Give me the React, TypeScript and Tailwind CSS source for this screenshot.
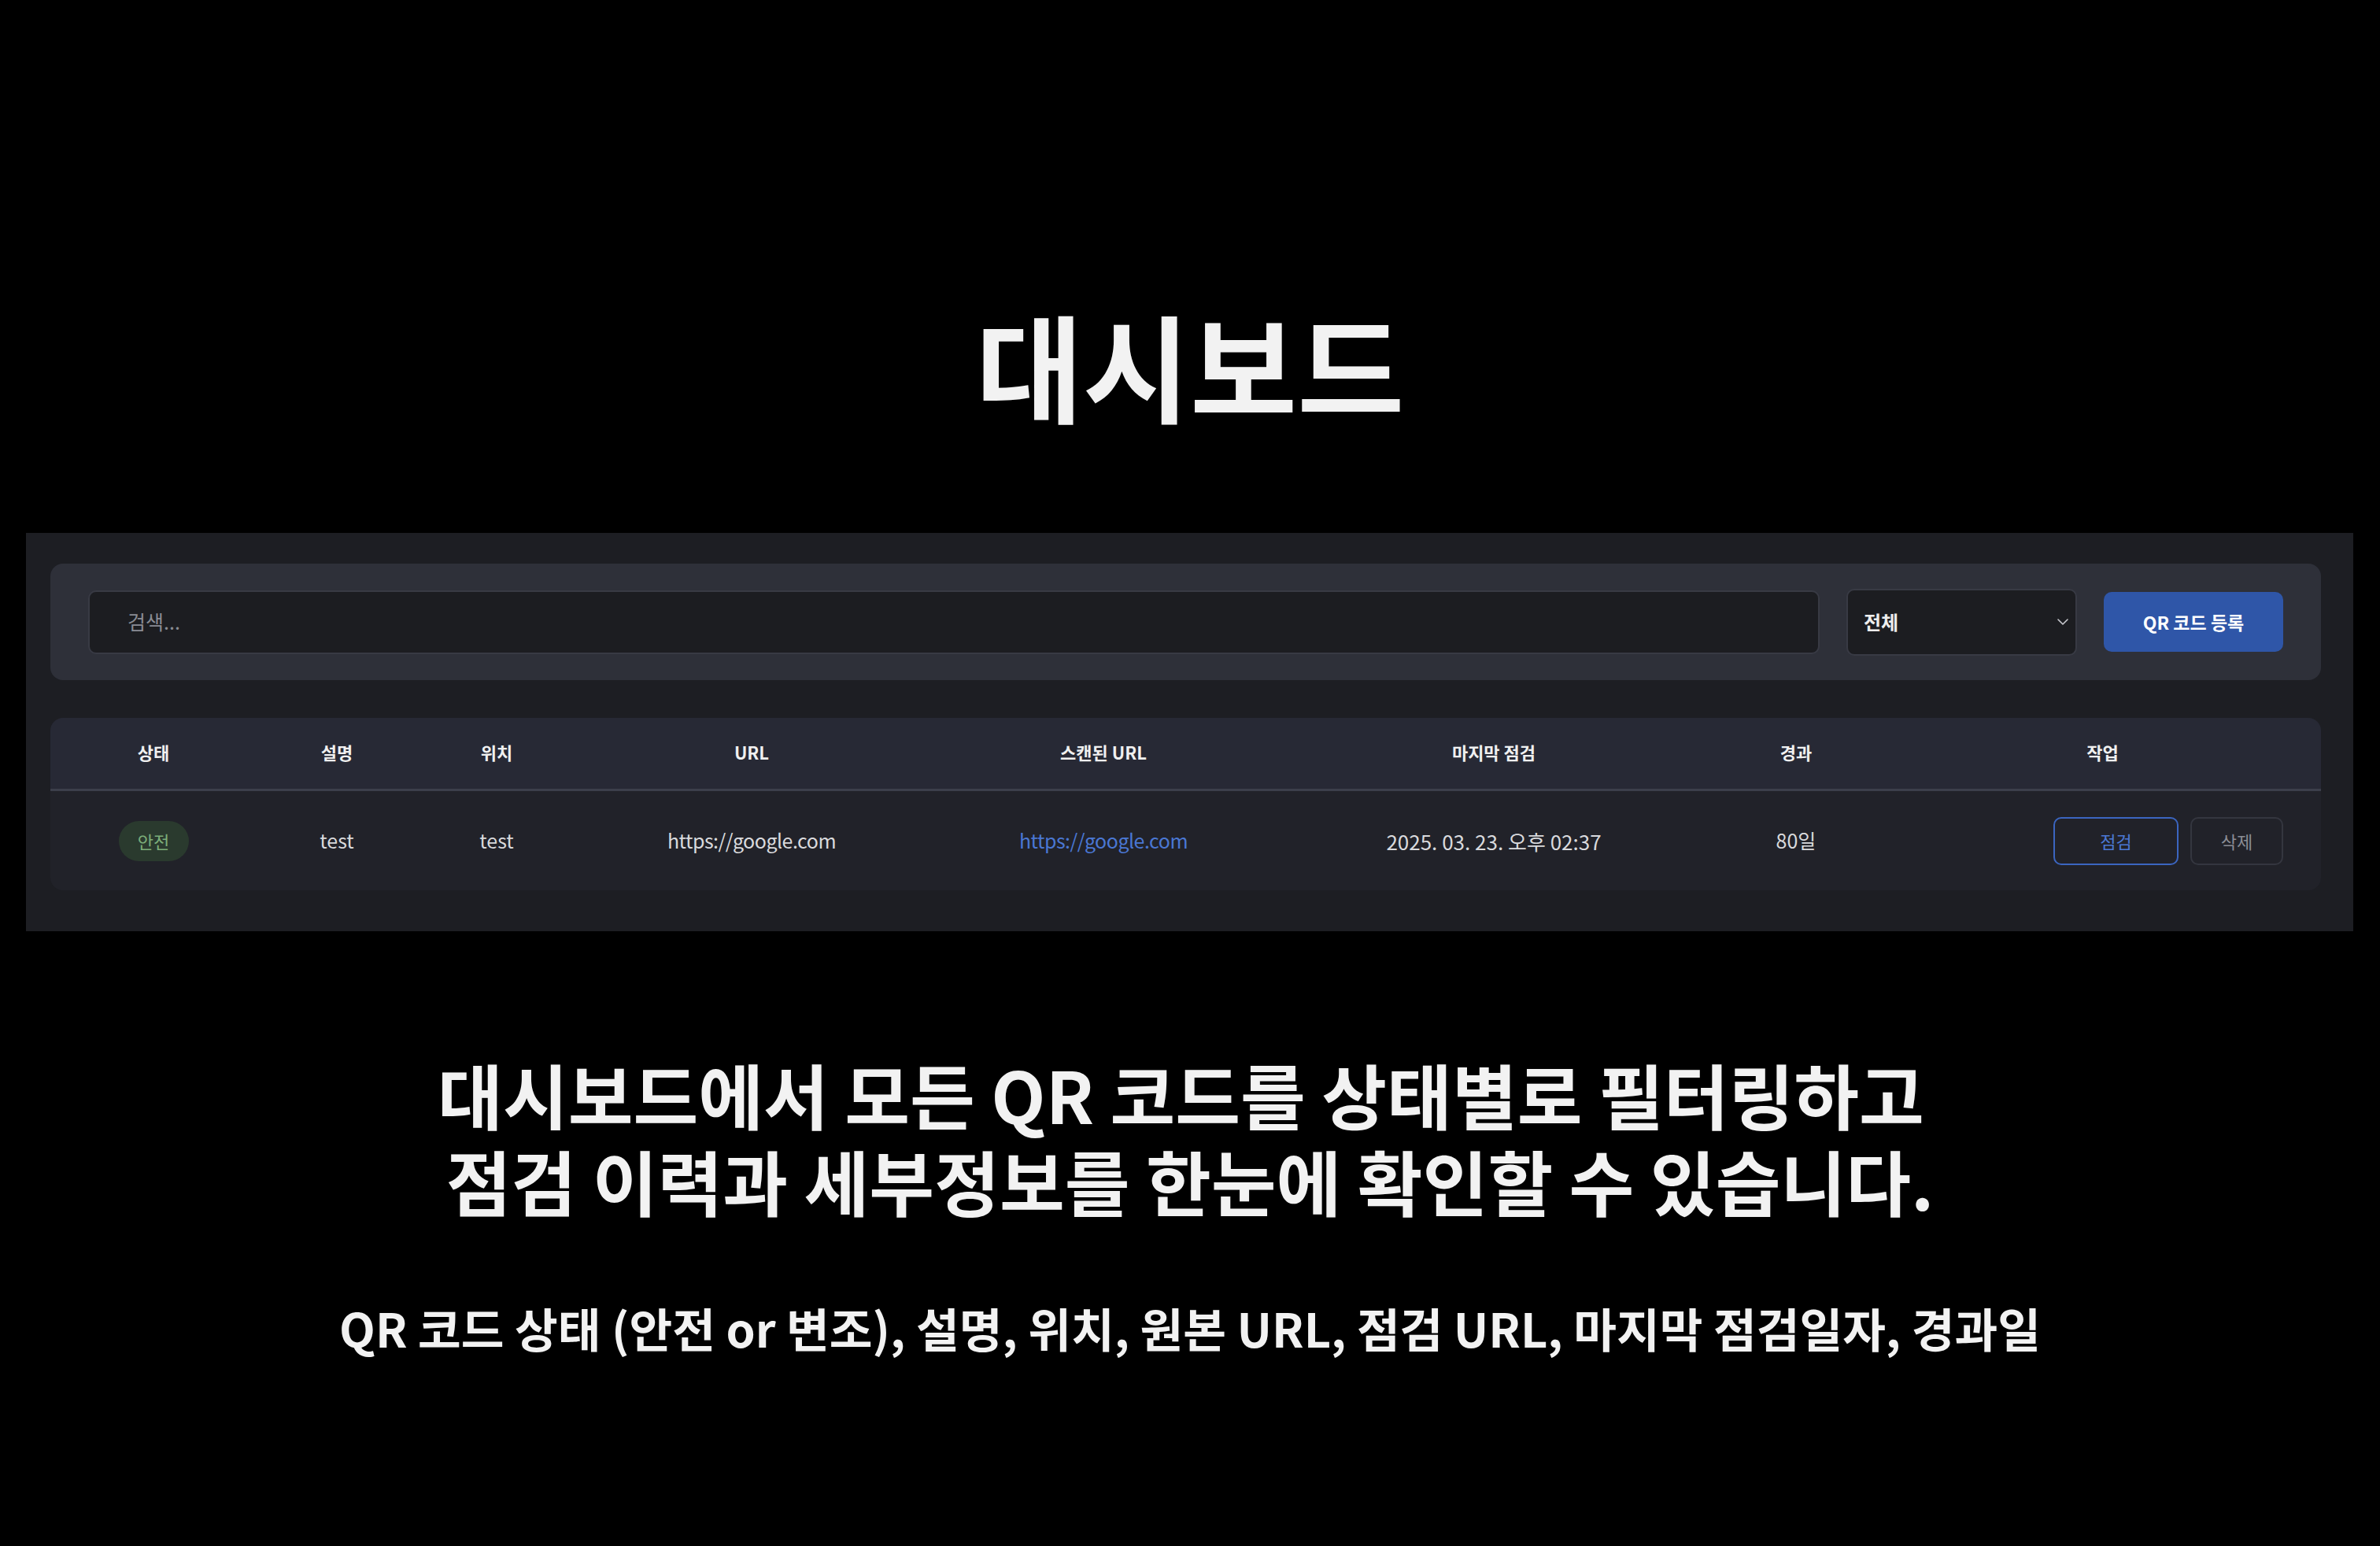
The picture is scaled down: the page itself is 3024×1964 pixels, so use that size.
import React from "react";

const FONT = { fontFamily: '"Noto Sans CJK KR", "Noto Sans", sans-serif' };

function Chevron() {
  return (
    <svg width="24" height="24" viewBox="0 0 24 24" fill="none" stroke="#c9cad0" strokeWidth="1.6" strokeLinecap="round" strokeLinejoin="round">
      <path d="M6 9 L12 15 L18 9" />
    </svg>
  );
}

const cols = "grid grid-cols-[262px_204px_202px_446px_448px_544px_224px_555px]";

export default function App() {
  const headers = ["상태", "설명", "위치", "URL", "스캔된 URL", "마지막 점검", "경과", "작업"];
  return (
    <div className="w-[3024px] h-[1964px] bg-black flex flex-col items-center overflow-hidden" style={FONT}>
      <div className="mt-[374px] h-[175px] text-[148px] leading-[175px] font-bold text-[#f2f2f2]">
        대시보드
      </div>

      <div className="mt-[128px] w-[2957px] self-start ml-[33px] bg-[#1d1e23] pl-[31px] pr-[41px] pt-[39px] pb-[52px]">
        <div className="h-[148px] rounded-[16px] bg-[#2e3039] px-[48px] flex items-center gap-[34px]">
          <div className="flex-1 h-[81px] rounded-[10px] border-2 border-[#383a44] bg-[#1c1d21] flex items-center pl-[48px] text-[25px] text-[#8a8c94]">
            검색...
          </div>
          <div className="w-[293px] h-[85px] rounded-[10px] border-2 border-[#383a44] bg-[#1c1d21] flex items-center justify-between pl-[20px] pr-[4px] text-[24px] font-semibold text-[#eeeeee]">
            <span>전체</span>
            <Chevron />
          </div>
          <div className="w-[228px] h-[76px] rounded-[10px] bg-[#2f56a8] flex items-center justify-center text-[23px] font-bold text-white">
            QR 코드 등록
          </div>
        </div>

        <div className="mt-[48px] rounded-[16px] overflow-hidden">
          <div className={`${cols} h-[93px] bg-[#272935] border-b-[3px] border-[#3c3f4b] items-center text-center text-[22px] font-bold text-[#f0f0f0]`}>
            {headers.map((h) => (
              <div key={h} className="-mt-[4px]">{h}</div>
            ))}
          </div>
          <div className={`${cols} h-[126px] bg-[#212229] items-center text-center text-[25px] text-[#d9dadd]`}>
            <div className="flex justify-center">
              <span className="w-[89px] h-[51px] rounded-full bg-[#2a3a2e] text-[#7cae79] text-[22px] flex items-center justify-center">안전</span>
            </div>
            <div>test</div>
            <div>test</div>
            <div className="tracking-[-0.5px]">https://google.com</div>
            <div className="tracking-[-0.5px] text-[#4a77d3]">https://google.com</div>
            <div className="text-[26px]">2025. 03. 23. 오후 02:37</div>
            <div>80일</div>
            <div className="flex justify-end gap-[15px] pr-[48px]">
              <span className="w-[159px] h-[61px] rounded-[10px] border-2 border-[#3b65c0] text-[#4b78d4] text-[22px] flex items-center justify-center">점검</span>
              <span className="w-[118px] h-[61px] rounded-[10px] border-2 border-[#34363f] text-[#8b8d95] text-[22px] flex items-center justify-center">삭제</span>
            </div>
          </div>
        </div>
      </div>

      <div className="mt-[151px] text-center text-[90px] font-bold text-[#f2f2f2] whitespace-nowrap flex flex-col items-center">
        <div className="h-[110px] leading-[110px] pr-[23px]">대시보드에서 모든 QR 코드를 상태별로 필터링하고</div>
        <div className="h-[110px] leading-[110px]">점검 이력과 세부정보를 한눈에 확인할 수 있습니다.</div>
      </div>

      <div className="mt-[95px] text-center text-[59.5px] leading-[75px] font-bold text-[#f2f2f2] whitespace-nowrap">
        QR 코드 상태 (안전 or 변조), 설명, 위치, 원본 URL, 점검 URL, 마지막 점검일자, 경과일
      </div>
    </div>
  );
}
